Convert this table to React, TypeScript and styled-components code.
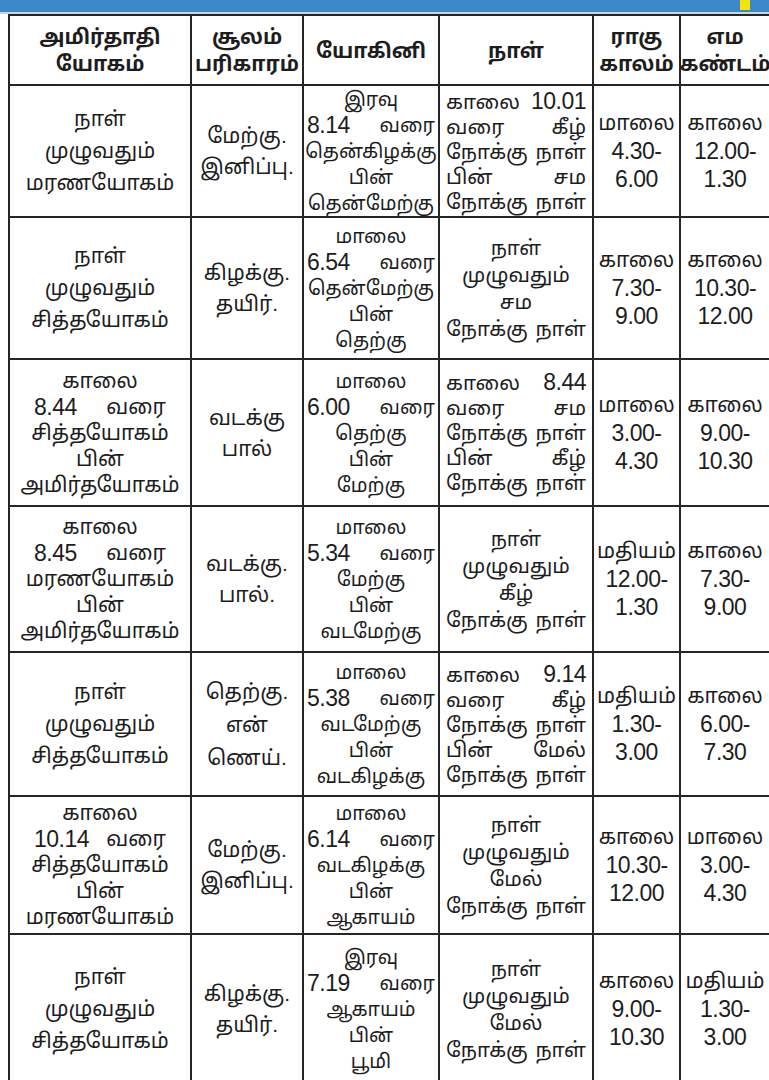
import React from "react";
import styled, { createGlobalStyle } from "styled-components";

const Global = createGlobalStyle`
  html, body { margin: 0; padding: 0; background: #ffffff; }
  body { overflow: hidden; }
`;

const Page = styled.div`
  width: 769px;
  height: 1080px;
  overflow: hidden;
  background: #ffffff;
  font-family: "Liberation Sans", "Noto Sans Tamil", "Noto Serif Tamil", "Lohit Tamil", "Noto Sans", sans-serif;
  color: #1d1d1d;
`;

const TopBar = styled.div`
  height: 12px;
  background: #3b89c9;
  display: flex;
  justify-content: flex-end;
  align-items: flex-start;
  padding-right: 19px;
  border-bottom: 2px solid #cfd4d8;
`;

const Marker = styled.div`
  width: 10px;
  height: 10px;
  background: #f4e600;
`;

const Grid = styled.div`
  margin-left: 8px;
  display: grid;
  grid-template-columns: 182px 112px 136px 154px 87px 90px;
  grid-template-rows: 70px 132px 142px 147px 146px 144px 138px 150px;
  border-top: 2px solid #262626;
  border-left: 2px solid #262626;
`;

const Cell = styled.div<{ $lh: number; $pad: number; $fs: number; $head?: boolean }>`
  box-sizing: border-box;
  border-right: 2px solid #262626;
  border-bottom: 2px solid #262626;
  display: flex;
  flex-direction: column;
  justify-content: center;
  padding: 0 ${(p) => p.$pad}px;
  line-height: ${(p) => p.$lh}px;
  font-size: ${(p) => p.$fs}px;
  font-weight: ${(p) => (p.$head ? 700 : 400)};
  overflow: hidden;
`;

const Line = styled.div<{ $split: boolean }>`
  display: flex;
  justify-content: ${(p) => (p.$split ? "space-between" : "center")};
  gap: 6px;
  white-space: nowrap;
`;

const Word = styled.span<{ $num: boolean }>`
  font-size: ${(p) => (p.$num ? "23px" : "inherit")};
  letter-spacing: ${(p) => (p.$num ? "-0.5px" : "normal")};
`;

const header: string[][] = [
  ["அமிர்தாதி", "யோகம்"],
  ["சூலம்", "பரிகாரம்"],
  ["யோகினி"],
  ["நாள்"],
  ["ராகு", "காலம்"],
  ["எம", "கண்டம்"],
];

const rows: string[][][] = [
  [
    ["நாள்", "முழுவதும்", "மரணயோகம்"],
    ["மேற்கு.", "இனிப்பு."],
    ["இரவு", "8.14 வரை", "தென்கிழக்கு", "பின்", "தென்மேற்கு"],
    ["காலை 10.01", "வரை கீழ்", "நோக்கு நாள்", "பின் சம", "நோக்கு நாள்"],
    ["மாலை", "4.30-", "6.00"],
    ["காலை", "12.00-", "1.30"],
  ],
  [
    ["நாள்", "முழுவதும்", "சித்தயோகம்"],
    ["கிழக்கு.", "தயிர்."],
    ["மாலை", "6.54 வரை", "தென்மேற்கு", "பின்", "தெற்கு"],
    ["நாள்", "முழுவதும்", "சம", "நோக்கு நாள்"],
    ["காலை", "7.30-", "9.00"],
    ["காலை", "10.30-", "12.00"],
  ],
  [
    ["காலை", "8.44 வரை", "சித்தயோகம்", "பின்", "அமிர்தயோகம்"],
    ["வடக்கு", "பால்"],
    ["மாலை", "6.00 வரை", "தெற்கு", "பின்", "மேற்கு"],
    ["காலை 8.44", "வரை சம", "நோக்கு நாள்", "பின் கீழ்", "நோக்கு நாள்"],
    ["மாலை", "3.00-", "4.30"],
    ["காலை", "9.00-", "10.30"],
  ],
  [
    ["காலை", "8.45 வரை", "மரணயோகம்", "பின்", "அமிர்தயோகம்"],
    ["வடக்கு.", "பால்."],
    ["மாலை", "5.34 வரை", "மேற்கு", "பின்", "வடமேற்கு"],
    ["நாள்", "முழுவதும்", "கீழ்", "நோக்கு நாள்"],
    ["மதியம்", "12.00-", "1.30"],
    ["காலை", "7.30-", "9.00"],
  ],
  [
    ["நாள்", "முழுவதும்", "சித்தயோகம்"],
    ["தெற்கு.", "என்", "ணெய்."],
    ["மாலை", "5.38 வரை", "வடமேற்கு", "பின்", "வடகிழக்கு"],
    ["காலை 9.14", "வரை கீழ்", "நோக்கு நாள்", "பின் மேல்", "நோக்கு நாள்"],
    ["மதியம்", "1.30-", "3.00"],
    ["காலை", "6.00-", "7.30"],
  ],
  [
    ["காலை", "10.14 வரை", "சித்தயோகம்", "பின்", "மரணயோகம்"],
    ["மேற்கு.", "இனிப்பு."],
    ["மாலை", "6.14 வரை", "வடகிழக்கு", "பின்", "ஆகாயம்"],
    ["நாள்", "முழுவதும்", "மேல்", "நோக்கு நாள்"],
    ["காலை", "10.30-", "12.00"],
    ["மாலை", "3.00-", "4.30"],
  ],
  [
    ["நாள்", "முழுவதும்", "சித்தயோகம்"],
    ["கிழக்கு.", "தயிர்."],
    ["இரவு", "7.19 வரை", "ஆகாயம்", "பின்", "பூமி"],
    ["நாள்", "முழுவதும்", "மேல்", "நோக்கு நாள்"],
    ["காலை", "9.00-", "10.30"],
    ["மதியம்", "1.30-", "3.00"],
  ],
];

const pads = [24, 4, 3, 6, 2, 2];
const sizes = [21, 21, 19.5, 20.5, 21, 21];

const lineHeight = (col: number, n: number): number => {
  if (col === 0) return n === 3 ? 32 : 26;
  if (col === 1) return n === 3 ? 33 : 31;
  if (col === 2) return 26;
  if (col === 3) return n === 4 ? 27 : 25;
  return 28;
};

const isNum = (w: string) => /^[\d.\-]+$/.test(w);

const renderLine = (text: string, key: number) => {
  const words = text.split(" ");
  const split = words.length > 1;
  return (
    <Line key={key} $split={split}>
      {words.map((w, i) => (
        <Word key={i} $num={isNum(w)}>
          {w}
        </Word>
      ))}
    </Line>
  );
};

export default function App() {
  return (
    <Page>
      <Global />
      <TopBar>
        <Marker />
      </TopBar>
      <Grid>
        {header.map((lines, c) => (
          <Cell key={`h${c}`} $head $lh={27} $pad={2} $fs={20.5}>
            {lines.map(renderLine)}
          </Cell>
        ))}
        {rows.map((row, r) =>
          row.map((lines, c) => (
            <Cell
              key={`${r}-${c}`}
              $lh={lineHeight(c, lines.length)}
              $pad={pads[c]}
              $fs={sizes[c]}
            >
              {lines.map(renderLine)}
            </Cell>
          ))
        )}
      </Grid>
    </Page>
  );
}
